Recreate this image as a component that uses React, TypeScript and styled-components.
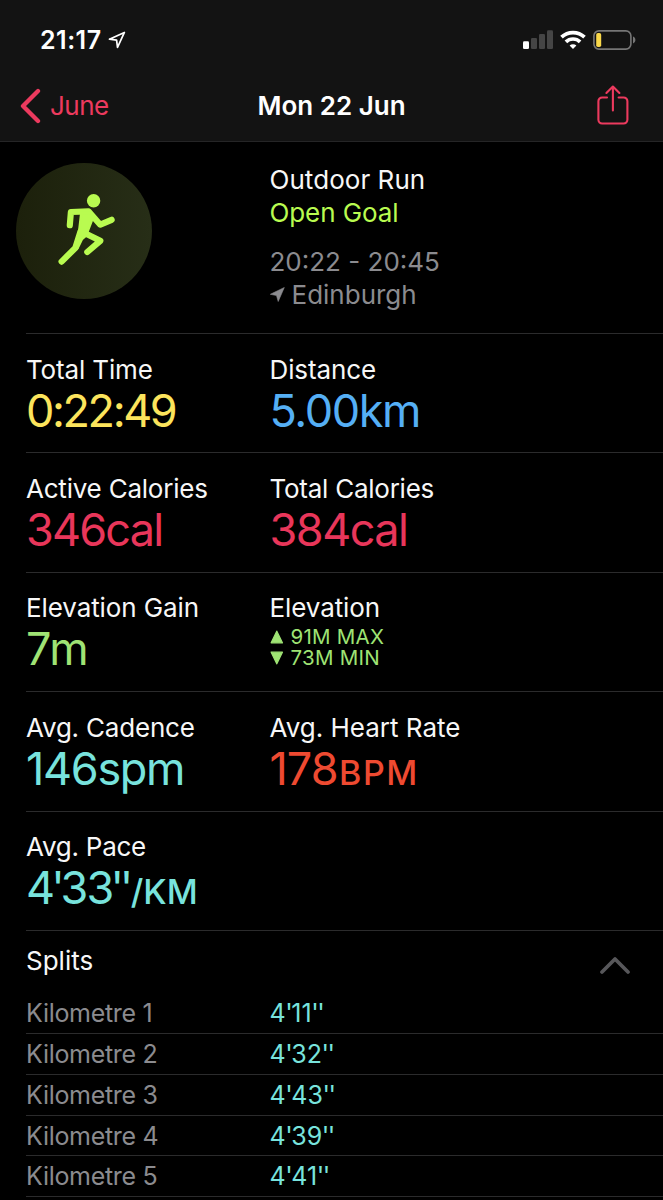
import React from 'react';
import styled, { createGlobalStyle } from 'styled-components';

const colors = {
  pink: '#ec3a5e',
  red: '#e8365a',
  yellow: '#fce45c',
  blue: '#55aff5',
  green: '#9fe374',
  lime: '#b9fb50',
  teal: '#78e3dd',
  orange: '#ee4a31',
  grey: '#8b8b8f',
  line: '#2b2b2c',
};

const GlobalStyle = createGlobalStyle`
  * { box-sizing: border-box; }
  body {
    margin: 0;
    background: #000;
    color: #f7f7f7;
    font-family: Inter, "Liberation Sans", sans-serif;
    font-size: 26px;
    overflow: hidden;
  }
`;

const Screen = styled.main`
  width: 663px;
  height: 1200px;
  overflow: hidden;
  background: #000;
`;

const Header = styled.header`
  height: 142px;
  background: #131313;
  border-bottom: 1px solid #252526;
`;

const StatusBar = styled.div`
  display: flex;
  align-items: center;
  height: 72px;
  padding: 7px 27px 0 40px;
`;

const Clock = styled.span`
  font-size: 25px;
  font-weight: 600;
  letter-spacing: 0.5px;
  color: #fff;
  margin-right: 6px;
`;

const StatusIcons = styled.div`
  display: flex;
  align-items: center;
  gap: 7.2px;
  margin-left: auto;
`;

const NavBar = styled.nav`
  display: grid;
  grid-template-columns: 1fr auto 1fr;
  align-items: center;
  height: 69px;
  padding: 0 34px 2px;
`;

const BackButton = styled.a`
  display: flex;
  align-items: center;
  gap: 9px;
  margin-left: -14px;
  letter-spacing: -0.5px;
  color: ${colors.pink};
`;

const Title = styled.h1`
  margin: 0;
  font-size: 26px;
  line-height: 32px;
  font-weight: 600;
  color: #fff;
`;

const ShareButton = styled.a`
  display: flex;
  justify-self: end;
  padding-bottom: 2px;
`;

const Summary = styled.section`
  display: grid;
  grid-template-columns: 253.5px 1fr;
  height: 191px;
  padding: 21px 0 0 16px;
`;

const Badge = styled.div`
  width: 136px;
  height: 136px;
  border-radius: 50%;
  background: linear-gradient(90deg, #1c200b, #272e17);
`;

const DetailLine = styled.div<{ $color?: string; $gap?: number; $track?: number }>`
  display: flex;
  align-items: center;
  line-height: 33px;
  margin-top: ${(p) => p.$gap ?? 0}px;
  color: ${(p) => p.$color ?? 'inherit'};
  letter-spacing: ${(p) => p.$track ?? 0}px;
`;

const Metrics = styled.div`
  margin-left: 26px;
`;

const MetricRow = styled.section<{ $height: number; $top: number }>`
  display: grid;
  grid-template-columns: 243.5px 1fr;
  height: ${(p) => p.$height}px;
  padding-top: ${(p) => p.$top}px;
  border-top: 1px solid ${colors.line};
`;

const Label = styled.div<{ $track?: number }>`
  line-height: 32px;
  letter-spacing: ${(p) => p.$track ?? 0}px;
  white-space: nowrap;
`;

const Value = styled.div<{ $color: string; $track?: number }>`
  margin-top: 1px;
  font-size: 45px;
  line-height: 48px;
  color: ${(p) => p.$color};
  letter-spacing: ${(p) => p.$track ?? 0}px;
  white-space: nowrap;
`;

const Unit = styled.span<{ $track?: number }>`
  margin-left: 1.5px;
  font-size: 34px;
  font-weight: 500;
  letter-spacing: ${(p) => p.$track ?? 0}px;
`;

const Ticks = styled.span`
  margin-left: -0.045em;
  letter-spacing: -0.09em;
`;

const RangeList = styled.div`
  padding-top: 2px;
`;

const Range = styled.div`
  display: flex;
  align-items: center;
  gap: 7px;
  font-size: 20.5px;
  line-height: 21px;
  letter-spacing: 0.25px;
  color: ${colors.green};
`;

const SplitsHeader = styled.div`
  display: flex;
  justify-content: space-between;
  height: 63px;
  padding: 14px 32px 0 0;
  border-top: 1px solid ${colors.line};
  line-height: 32px;
`;

const SplitRow = styled.div<{ $height: number }>`
  display: grid;
  grid-template-columns: 243.5px 1fr;
  align-items: center;
  height: ${(p) => p.$height}px;
  border-bottom: 1px solid ${colors.line};
  font-size: 25px;
  line-height: 30px;
  letter-spacing: -0.3px;
  color: ${colors.grey};
`;

const SplitTime = styled.span`
  letter-spacing: 0;
  color: ${colors.teal};

  ${Ticks} {
    margin-left: -0.02em;
    letter-spacing: -0.055em;
  }
`;

type Metric = {
  label: string;
  track?: number;
  value?: string;
  unit?: string;
  unitTrack?: number;
  valueTrack?: number;
  color: string;
};

const rows: { height: number; top: number; items: Metric[] }[] = [
  {
    height: 119,
    top: 20,
    items: [
      { label: 'Total Time', track: -0.15, value: '0:22:49', valueTrack: -2.4, color: colors.yellow },
      { label: 'Distance', track: -0.1, value: '5.00km', valueTrack: -1.4, color: colors.blue },
    ],
  },
  {
    height: 120,
    top: 20,
    items: [
      { label: 'Active Calories', track: -0.22, value: '346cal', valueTrack: -1.8, color: colors.red },
      { label: 'Total Calories', track: -0.25, value: '384cal', valueTrack: -1.5, color: colors.red },
    ],
  },
  {
    height: 119,
    top: 19,
    items: [
      { label: 'Elevation Gain', track: -0.1, value: '7m', valueTrack: 0, color: colors.green },
      { label: 'Elevation', track: -0.1, color: colors.green },
    ],
  },
  {
    height: 120,
    top: 20,
    items: [
      { label: 'Avg. Cadence', track: -0.2, value: '146spm', valueTrack: -1.3, color: colors.teal },
      { label: 'Avg. Heart Rate', value: '178', valueTrack: -1, unit: 'BPM', unitTrack: 1.6, color: colors.orange },
    ],
  },
  {
    height: 119,
    top: 19,
    items: [
      { label: 'Avg. Pace', track: -0.25, value: "4'33''", valueTrack: -1.9, unit: '/KM', unitTrack: 0, color: colors.teal },
    ],
  },
];

const splits = [
  { name: 'Kilometre 1', time: "4'11''", height: 41 },
  { name: 'Kilometre 2', time: "4'32''", height: 41 },
  { name: 'Kilometre 3', time: "4'43''", height: 41 },
  { name: 'Kilometre 4', time: "4'39''", height: 40 },
  { name: 'Kilometre 5', time: "4'41''", height: 41 },
];

const Duration = ({ text }: { text: string }) => (
  <>
    {text.split(/('+)/).map((part, i) => (part.startsWith("'") ? <Ticks key={i}>{part}</Ticks> : part))}
  </>
);

const LocationOutline = () => (
  <svg width="18" height="18" viewBox="0 0 18 18" fill="none" stroke="#fff" strokeWidth="1.7" strokeLinejoin="round">
    <path d="M16.4 1.4 1.4 8.2l7.2.9.9 7.3z" />
  </svg>
);

const Signal = () => (
  <svg width="30" height="20" viewBox="0 0 30 20">
    <rect x="0" y="11.3" width="6" height="7.7" rx="1.3" fill="#fff" />
    <rect x="8" y="8" width="6" height="11" rx="1.3" fill="#454545" />
    <rect x="16" y="4" width="6" height="15" rx="1.3" fill="#454545" />
    <rect x="24" y="0.3" width="6" height="18.7" rx="1.3" fill="#454545" />
  </svg>
);

const Wifi = () => (
  <svg width="26" height="20" viewBox="0 0 26 20" fill="none" stroke="#fff" strokeWidth="3.7">
    <path d="M1.5 7.2a16.5 16.5 0 0 1 23 0" />
    <path d="M5.9 11.9a10.2 10.2 0 0 1 14.2 0" />
    <path d="M13 19l-3.4-3.4a4.9 4.9 0 0 1 6.8 0z" fill="#fff" stroke="none" />
  </svg>
);

const Battery = () => (
  <svg width="43" height="20" viewBox="0 0 43 20">
    <rect x="0.9" y="0.9" width="37" height="18.2" rx="5" fill="none" stroke="#767676" strokeWidth="1.6" />
    <rect x="3.2" y="3" width="5" height="14" rx="1.8" fill="#f9d84a" />
    <path d="M40 6.6c3.2 1.2 3.2 5.6 0 6.8z" fill="#767676" />
  </svg>
);

const BackChevron = () => (
  <svg width="21" height="36" viewBox="0 0 21 36" fill="none" stroke={colors.pink} strokeWidth="4.3" strokeLinecap="round" strokeLinejoin="round">
    <path d="M18 3 3 18l15 15" />
  </svg>
);

const Share = () => (
  <svg width="32" height="40" viewBox="0 0 32 40" fill="none" stroke={colors.pink} strokeWidth="2.1" strokeLinecap="round" strokeLinejoin="round">
    <path d="M10 12.5H5.2A3.8 3.8 0 0 0 1.4 16.3v18.4a3.8 3.8 0 0 0 3.8 3.8h21.4a3.8 3.8 0 0 0 3.8-3.8V16.3a3.8 3.8 0 0 0-3.8-3.8H21.6" />
    <path d="M15.9 25.5V1.5M9.4 8l6.5-6.5L22.4 8" />
  </svg>
);

const Runner = () => (
  <svg width="136" height="136" viewBox="0 0 136 136" fill="none" stroke={colors.lime} strokeWidth="6.2" strokeLinecap="round" strokeLinejoin="round">
    <circle cx="77.6" cy="37.7" r="6.7" fill={colors.lime} stroke="none" />
    <path d="M53.8 62.2 54.9 49l17.6-.6L84.3 61.7l11.3-4.9" />
    <path d="M69.5 70.5 84.3 77.8 71.3 89" />
    <path d="M64.5 68.5 59.3 85 45.6 98.6" />
    <path d="M65.3 50h9.7l2 4.3-7 18.2-4 3.5-4.5 9.3-3-.8 4.5-14.5z" fill={colors.lime} strokeWidth="2.5" />
  </svg>
);

const LocationFill = () => (
  <svg width="22" height="15" viewBox="0 0 22 15">
    <path d="M14.300.5.3 7.3l6.2 1.2 1.700 6z" fill={colors.grey} stroke={colors.grey} strokeWidth="0.6" strokeLinejoin="round" />
  </svg>
);

const Triangle = ({ down }: { down?: boolean }) => (
  <svg width="14" height="14" viewBox="0 0 14 14">
    <path
      d={down ? 'M1.2 1.2h11.2L6.8 12.800z' : 'M6.8 1.2 12.4 12.8H1.2z'}
      fill={colors.green}
      stroke={colors.green}
      strokeWidth="1.3"
      strokeLinejoin="round"
    />
  </svg>
);

const CollapseIcon = styled.svg`
  margin-top: 10px;
`;

const Collapse = () => (
  <CollapseIcon width="31" height="20" viewBox="0 0 31 20" fill="none" stroke="#57575a" strokeWidth="3.7" strokeLinecap="round" strokeLinejoin="round">
    <path d="M2 17 15 4 28 17" />
  </CollapseIcon>
);

const App = () => (
  <>
    <GlobalStyle />
    <Screen>
      <Header>
        <StatusBar>
          <Clock>21:17</Clock>
          <LocationOutline />
          <StatusIcons>
            <Signal />
            <Wifi />
            <Battery />
          </StatusIcons>
        </StatusBar>
        <NavBar>
          <BackButton>
            <BackChevron />
            June
          </BackButton>
          <Title>Mon 22 Jun</Title>
          <ShareButton>
            <Share />
          </ShareButton>
        </NavBar>
      </Header>
      <Summary>
        <Badge>
          <Runner />
        </Badge>
        <div>
          <DetailLine $track={0.05}>Outdoor Run</DetailLine>
          <DetailLine $color={colors.lime} $track={-0.1}>Open Goal</DetailLine>
          <DetailLine $color={colors.grey} $gap={16}>20:22 - 20:45</DetailLine>
          <DetailLine $color={colors.grey}>
            <LocationFill />
            Edinburgh
          </DetailLine>
        </div>
      </Summary>
      <Metrics>
        {rows.map((row) => (
          <MetricRow key={row.items[0].label} $height={row.height} $top={row.top}>
            {row.items.map((m) => (
              <div key={m.label}>
                <Label $track={m.track}>{m.label}</Label>
                {m.value ? (
                  <Value $color={m.color} $track={m.valueTrack}>
                    <Duration text={m.value} />
                    {m.unit && <Unit $track={m.unitTrack}>{m.unit}</Unit>}
                  </Value>
                ) : (
                  <RangeList>
                    <Range>
                      <Triangle />
                      91M MAX
                    </Range>
                    <Range>
                      <Triangle down />
                      73M MIN
                    </Range>
                  </RangeList>
                )}
              </div>
            ))}
          </MetricRow>
        ))}
        <SplitsHeader>
          Splits
          <Collapse />
        </SplitsHeader>
        {splits.map((s) => (
          <SplitRow key={s.name} $height={s.height}>
            <span>{s.name}</span>
            <SplitTime>
              <Duration text={s.time} />
            </SplitTime>
          </SplitRow>
        ))}
      </Metrics>
    </Screen>
  </>
);

export default App;
